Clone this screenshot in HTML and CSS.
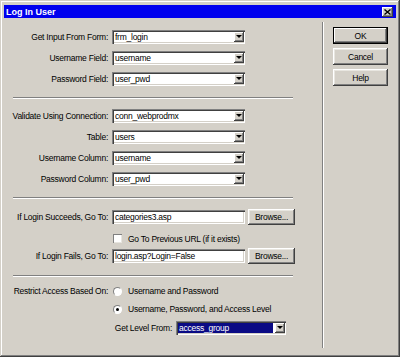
FILE: index.html
```html
<!DOCTYPE html>
<html lang="en">
<head>
    <meta charset="UTF-8">
    <title>Log In User</title>
    <link rel="stylesheet" href="styles.css">
</head>
<body>
    <div class="window">
        <div class="titlebar">
            <span class="title">Log In User</span>
            <span class="close">
                <svg width="7" height="6" viewBox="0 0 7 6"><path d="M0.5 0.5 L6.5 5.5 M6.5 0.5 L0.5 5.5" stroke="#000" stroke-width="1.4" fill="none"/></svg>
            </span>
        </div>

        <div class="content">
            <div class="main">
                <!-- form source -->
                <div class="group first">
                    <div class="row">
                        <span class="lbl">Get Input From Form:</span>
                        <div class="combo"><span class="val">frm_login</span><span class="arrow"></span></div>
                    </div>
                    <div class="row">
                        <span class="lbl">Username Field:</span>
                        <div class="combo"><span class="val">username</span><span class="arrow"></span></div>
                    </div>
                    <div class="row">
                        <span class="lbl">Password Field:</span>
                        <div class="combo"><span class="val">user_pwd</span><span class="arrow"></span></div>
                    </div>
                </div>

                <div class="sep"></div>

                <!-- database lookup -->
                <div class="group">
                    <div class="row">
                        <span class="lbl">Validate Using Connection:</span>
                        <div class="combo"><span class="val">conn_webprodmx</span><span class="arrow"></span></div>
                    </div>
                    <div class="row">
                        <span class="lbl">Table:</span>
                        <div class="combo"><span class="val">users</span><span class="arrow"></span></div>
                    </div>
                    <div class="row">
                        <span class="lbl">Username Column:</span>
                        <div class="combo"><span class="val">username</span><span class="arrow"></span></div>
                    </div>
                    <div class="row">
                        <span class="lbl">Password Column:</span>
                        <div class="combo"><span class="val">user_pwd</span><span class="arrow"></span></div>
                    </div>
                </div>

                <div class="sep"></div>

                <!-- redirects -->
                <div class="group">
                    <div class="row tall">
                        <span class="lbl">If Login Succeeds, Go To:</span>
                        <div class="field-line">
                            <div class="textbox">categories3.asp</div>
                            <button class="btn browse">Browse...</button>
                        </div>
                    </div>
                    <div class="row check-row">
                        <span class="lbl"></span>
                        <label class="option"><span class="checkbox"></span>Go To Previous URL (if it exists)</label>
                    </div>
                    <div class="row tall fails">
                        <span class="lbl">If Login Fails, Go To:</span>
                        <div class="field-line">
                            <div class="textbox">login.asp?Login=False</div>
                            <button class="btn browse">Browse...</button>
                        </div>
                    </div>
                </div>

                <div class="sep"></div>

                <!-- access restriction -->
                <div class="group access">
                    <div class="row radio-row">
                        <span class="lbl">Restrict Access Based On:</span>
                        <label class="option"><span class="radio"></span>Username and Password</label>
                    </div>
                    <div class="row radio-row second">
                        <span class="lbl"></span>
                        <label class="option"><span class="radio checked"></span>Username, Password, and Access Level</label>
                    </div>
                    <div class="level-row">
                        <span class="level-lbl">Get Level From:</span>
                        <div class="combo small"><span class="val selected">access_group</span><span class="arrow"></span></div>
                    </div>
                </div>
            </div>

            <div class="side">
                <button class="btn action default">OK</button>
                <button class="btn action">Cancel</button>
                <button class="btn action">Help</button>
            </div>
        </div>
    </div>
</body>
</html>
```

FILE: styles.css
```css
* {
    box-sizing: border-box;
}
body {
    margin: 0;
    font-family: "Liberation Sans", Arial, sans-serif;
    font-size: 8.5px;
    letter-spacing: -0.25px;
    color: #000;
    background: #d4d0c8;
}
.window {
    width: 400px;
    height: 357px;
    padding: 5px 4px 4px;
    background: #d4d0c8;
    display: flex;
    flex-direction: column;
    box-shadow: inset -1px -1px #404040, inset 1px 1px #d4d0c8, inset -2px -2px #808080, inset 2px 2px #fff;
}
.titlebar {
    height: 13px;
    background: #0000ee;
    display: flex;
    align-items: center;
    justify-content: space-between;
    padding: 0 3px 0 2px;
}
.title {
    color: #fff;
    font-weight: bold;
    font-size: 9px;
    letter-spacing: 0;
}
.close {
    width: 11px;
    height: 10px;
    background: #d4d0c8;
    display: flex;
    align-items: center;
    justify-content: center;
    box-shadow: inset -1px -1px #404040, inset 1px 1px #fff, inset -2px -2px #808080;
}
.content {
    flex: 1;
    display: flex;
}
.main {
    width: 318px;
}
.group {
    margin-top: 10px;
}
.group.first {
    margin-top: 0;
    padding-top: 12px;
}
.group.access {
    margin-top: 7px;
}
.row {
    display: grid;
    grid-template-columns: 104px auto;
    column-gap: 4px;
    align-items: center;
    height: 14px;
    margin-bottom: 7px;
}
.row:last-child {
    margin-bottom: 0;
}
.lbl {
    text-align: right;
    white-space: nowrap;
}
.sep {
    margin: 11px 0 0 9px;
    width: 280px;
    height: 2px;
    border-top: 1px solid #808080;
    border-bottom: 1px solid #fff;
}
.combo {
    width: 133px;
    height: 14px;
    background: #fff;
    display: flex;
    align-items: center;
    padding: 2px 1px 2px 2px;
    box-shadow: inset 1px 1px #808080, inset 2px 2px #404040, inset -1px -1px #fff, inset -2px -2px #d4d0c8;
}
.combo.small {
    width: 110px;
}
.val {
    flex: 1;
    padding-left: 1px;
    line-height: 10px;
    white-space: nowrap;
}
.val.selected {
    background: #0a0a84;
    color: #fff;
    margin-right: 2px;
}
.arrow {
    width: 10px;
    height: 10px;
    background: #d4d0c8;
    display: flex;
    align-items: center;
    justify-content: center;
    box-shadow: inset -1px -1px #404040, inset 1px 1px #fff, inset -2px -2px #808080;
}
.arrow::after {
    content: "";
    border-left: 3px solid transparent;
    border-right: 3px solid transparent;
    border-top: 3px solid #000;
    margin-top: -1px;
}
.row.tall {
    height: 16px;
    margin-bottom: 6px;
}
.row.check-row {
    height: 15px;
    margin-bottom: 2px;
}
.field-line {
    display: flex;
    align-items: center;
    gap: 3px;
}
.textbox {
    width: 133px;
    height: 14px;
    background: #fff;
    padding: 2px 3px;
    line-height: 10px;
    white-space: nowrap;
    box-shadow: inset 1px 1px #808080, inset 2px 2px #404040, inset -1px -1px #fff, inset -2px -2px #d4d0c8;
}
.btn {
    font-family: inherit;
    font-size: inherit;
    letter-spacing: inherit;
    color: #000;
    background: #d4d0c8;
    border: none;
    padding: 0;
    box-shadow: inset -1px -1px #404040, inset 1px 1px #fff, inset -2px -2px #808080, inset 2px 2px #e8e6e0;
}
.btn.browse {
    width: 47px;
    height: 16px;
}
.option {
    display: flex;
    align-items: center;
    gap: 6px;
    padding-left: 1px;
    white-space: nowrap;
}
.checkbox {
    width: 9px;
    height: 9px;
    background: #fff;
    box-shadow: inset 1px 1px #808080, inset -1px -1px #e8e6e0;
}
.radio {
    width: 9px;
    height: 9px;
    border-radius: 50%;
    background: #fff;
    border: 1px solid;
    border-color: #808080 #fff #fff #808080;
    display: flex;
    align-items: center;
    justify-content: center;
}
.radio.checked::after {
    content: "";
    width: 3px;
    height: 3px;
    border-radius: 50%;
    background: #000;
}
.row.radio-row {
    margin-bottom: 4px;
}
.row.radio-row.second {
    margin-bottom: 5px;
}
.level-row {
    display: flex;
    align-items: center;
    gap: 4px;
    height: 14px;
    padding-left: 104px;
}
.level-lbl {
    width: 64px;
    text-align: right;
    white-space: nowrap;
}
.side {
    flex: 1;
    margin: 4px 0 5px;
    border-left: 1px solid #808080;
    box-shadow: inset 1px 0 #fff;
    padding: 5px 0 0 10px;
    display: flex;
    flex-direction: column;
    gap: 4px;
}
.btn.action {
    width: 55px;
    height: 17px;
}
.btn.default {
    box-shadow: inset 0 0 0 1px #000, inset -2px -2px #404040, inset 2px 2px #fff, inset -3px -3px #808080;
}
```
